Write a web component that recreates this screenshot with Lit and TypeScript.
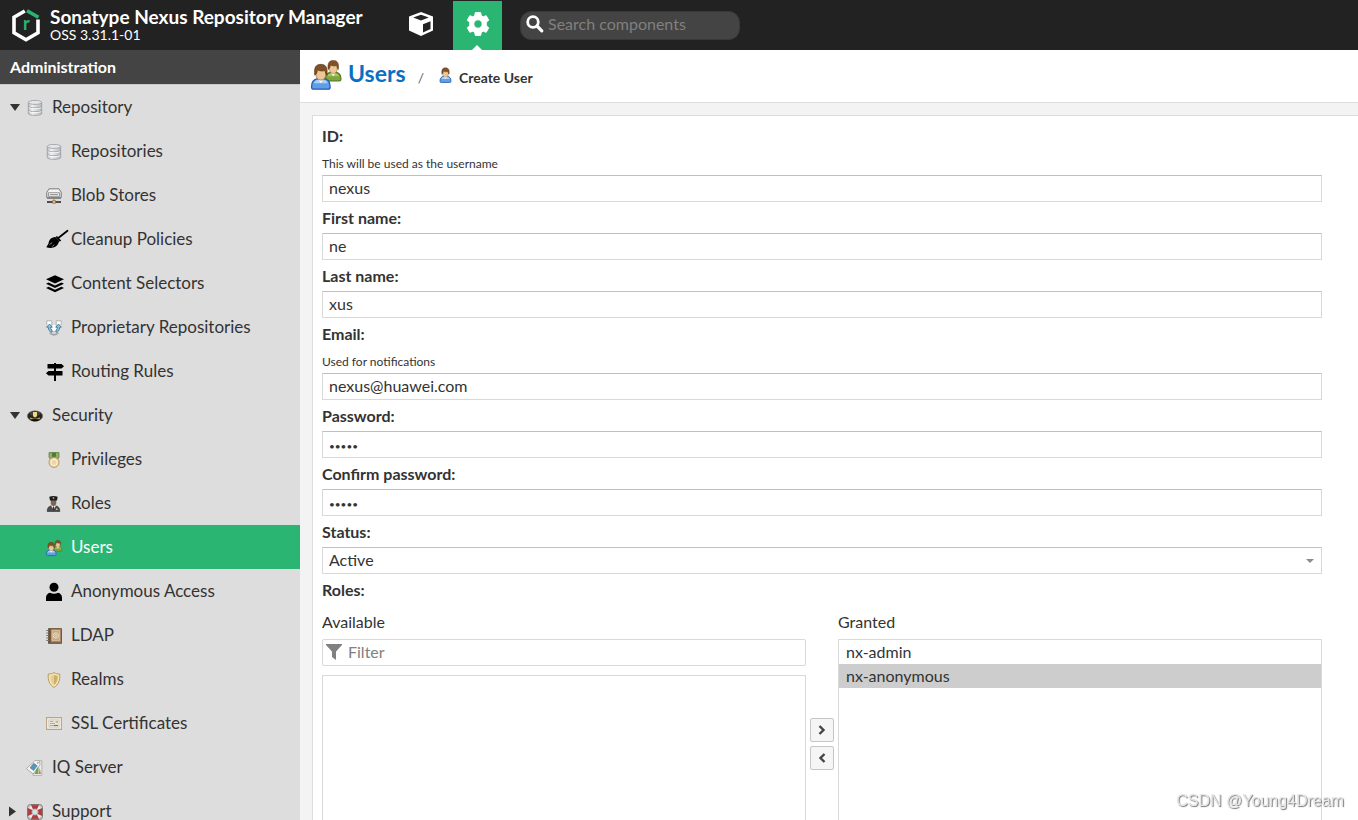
import { LitElement, html, svg, css, nothing, TemplateResult } from "lit";
import { customElement } from "lit/decorators.js";
import { classMap } from "lit/directives/class-map.js";

interface NavItem {
  label: string;
  icon: string;
  level: number;
  arrow?: "open" | "closed";
  active?: boolean;
}

const NAV: NavItem[] = [
  { label: "Repository", icon: "database", level: 0, arrow: "open" },
  { label: "Repositories", icon: "database", level: 1 },
  { label: "Blob Stores", icon: "drive", level: 1 },
  { label: "Cleanup Policies", icon: "broom", level: 1 },
  { label: "Content Selectors", icon: "layers", level: 1 },
  { label: "Proprietary Repositories", icon: "proprietary", level: 1 },
  { label: "Routing Rules", icon: "signs", level: 1 },
  { label: "Security", icon: "cap", level: 0, arrow: "open" },
  { label: "Privileges", icon: "medal", level: 1 },
  { label: "Roles", icon: "officer", level: 1 },
  { label: "Users", icon: "users", level: 1, active: true },
  { label: "Anonymous Access", icon: "person", level: 1 },
  { label: "LDAP", icon: "book", level: 1 },
  { label: "Realms", icon: "shield", level: 1 },
  { label: "SSL Certificates", icon: "certificate", level: 1 },
  { label: "IQ Server", icon: "tags", level: 0 },
  { label: "Support", icon: "lifebuoy", level: 0, arrow: "closed" },
];

const figure = (shirt: string, edge: string, light: string) => svg`
  <path d="M1 14.200c0-3 1.300-4.600 3.600-4.900h3.800c2.300.3 3.600 1.900 3.600 4.900 0 1-.5 1.300-1.200 1.300H2.200C1.500 15.500 1 15.200 1 14.200z" fill=${shirt} stroke=${edge} stroke-width=".8"/>
  <path d="M2.300 12c.5-1.200 1.300-1.700 2.400-1.900h3.700c1.100.2 1.800.7 2.300 1.900z" fill=${light}/>
  <path d="M4.700 9.200h3.600L6.500 12z" fill="#fff"/>
  <path d="M3.600 3.500h5.800v3.300c0 2-1.300 3.300-2.900 3.300S3.600 8.800 3.600 6.800z" fill="#ebc697" stroke="#a87845" stroke-width=".5"/>
  <path d="M2.900 7.200C2.300 2.800 3.500.8 6.500.8s4.200 2 3.600 6.400c-.8-.6-1-1.500-1-2.700-1.400.4-3.300.3-4.700-.5 0 1.500-.4 2.500-1.500 3.200z" fill="#805126" stroke="#5c3817" stroke-width=".4"/>`;

const usersArt = svg`
  <g transform="translate(7 -.4) scale(.75)">${figure("#7fa53c", "#52741f", "#a5c765")}</g>
  <g transform="translate(-.6 1.600) scale(.9)">${figure("#5e9fe8", "#285ba8", "#a9d2fb")}</g>`;

const ICONS: Record<string, TemplateResult> = {
  database: svg`
    <defs><linearGradient id="metal" x1="0" x2="1"><stop offset="0" stop-color="#b9bdc0"/><stop offset=".3" stop-color="#eef0f1"/><stop offset="1" stop-color="#b4b8bc"/></linearGradient></defs>
    <path d="M1.300 2.500v11c0 2.500 13.400 2.500 13.400 0v-11z" fill="url(#metal)" stroke="#979b9f" stroke-width=".8"/>
    <path d="M1.500 6.300c0 2.200 13 2.200 13 0M1.500 10.200c0 2.200 13 2.200 13 0" fill="none" stroke="#92969b" stroke-width=".9"/>
    <path d="M1.800 7.400c1.500 1.700 10.900 1.700 12.400 0M1.800 11.300c1.500 1.700 10.900 1.700 12.400 0" fill="none" stroke="#fff" stroke-width=".8"/>
    <ellipse cx="8" cy="2.400" rx="6.700" ry="2" fill="#e4e6e8" stroke="#999da1" stroke-width=".8"/>`,
  drive: svg`
    <path d="M3 .8h10l2.300 3.500v5.200H.7V4.300z" fill="#d9d9d9" stroke="#777" stroke-width=".9"/>
    <path d="M3.400 1.700h9.200l1.700 2.700H1.700z" fill="#f4f4f4"/>
    <path d="M2.500 4.700h11v3.600h-11z" fill="#eee" stroke="#888" stroke-width=".8"/>
    <path d="M4 6.500h8" stroke="#999" stroke-width="1"/>
    <path d="M1 10.500h14M8 10.500v3" stroke="#888" stroke-width="1"/>
    <path d="M1 14h14" stroke="#4d4d4d" stroke-width="2"/>
    <path d="M6.500 12.500h3v2.800h-3z" fill="#e5b476" stroke="#8e6737" stroke-width=".6"/>`,
  broom: svg`
    <path d="M21.500-1.200 12 6.300" stroke="#000" stroke-width="1.800" stroke-linecap="round"/>
    <path d="m10.300 4.500 4.200 4.600" stroke="#000" stroke-width="1.800"/>
    <path d="M9.300 4.900C5 5.200 2.900 8 2.500 11.500L.3 15.300c5.200 1.800 11.900.2 12.800-6.500z" fill="#000"/>
    <path d="m3.300 12.700 3-2.200M6.300 14.500l2-1.800" stroke="#ddd" stroke-width=".6"/>`,
  layers: svg`
    <path d="M9-.8 18 3.300 9 7.500 0 3.300z"/>
    <path d="m0 7.700 2.600-1.200L9 9.500l6.400-3L18 7.700l-9 4.200zM0 12l2.600-1.200L9 13.800l6.400-3L18 12l-9 4.300z"/>`,
  proprietary: svg`
    <path d="M.8 5V.8h5v5L4.500 8.500c0 3 1.500 3 3.500 3s3.500 0 3.500-3L10.200 5.800v-5h5V5" fill="#fff" stroke="#a5adb1" stroke-width=".9"/>
    <path d="M4 12.500c1.300 3 6.700 3 8 0" fill="none" stroke="#9fa6aa" stroke-width="1.800"/>
    <path d="M3.500 4 .6 7.200h1.700c0 2.800 1.200 4.500 3.700 5V9.800C4.700 9.500 4.700 8.500 4.700 7.200h1.600zM12.500 4 9.700 7.200h1.600c0 1.300 0 2.300-1.300 2.600v2.400c2.500-.5 3.700-2.200 3.700-5h1.700z" fill="#8fc0dc" stroke="#39718d" stroke-width=".8"/>`,
  signs: svg`
    <path d="M8-1h2v18H8z"/>
    <path d="M1.500 0h14L18 2.200l-2.500 2.200h-14z"/>
    <path d="M16.500 7h-14L0 9.200l2.500 2.200h14z"/>`,
  cap: svg`
    <ellipse cx="8" cy="8" rx="7.700" ry="5.200" fill="#272522" stroke="#77736a" stroke-width=".6"/>
    <path d="M2 5c3-2.500 9-2.500 12 0l-2.500 2.500h-7z" fill="#45423b"/>
    <path d="M3 10c3 1.600 7 1.600 10 0" fill="none" stroke="#c9b460" stroke-width="1.200"/>
    <path d="M6 4h4v4.200L8 9.600 6 8.200z" fill="#ecd987"/>
    <path d="M3.500 12c2.500-1.200 6.500-1.200 9 0-2 1.700-7 1.700-9 0z" fill="#0e0d0c"/>`,
  medal: svg`
    <path d="M3 .5h10v5.200l-2.500 1.800h-5L3 5.700z" fill="#8ead69" stroke="#63833f" stroke-width=".8"/>
    <path d="M6 .8h4v4H6z" fill="#53793a"/>
    <circle cx="8" cy="10.400" r="5" fill="#f0d9a5" stroke="#b08f5c" stroke-width=".9"/>
    <circle cx="8" cy="10.400" r="3.200" fill="#ecd7aa" stroke="#fff6dc" stroke-width=".9"/>`,
  officer: svg`
    <path d="M1.200 15.500c0-3.600 1.300-5 3.500-5.500h5.600c2.200.5 3.500 1.900 3.500 5.500z" fill="#4b4b4f" stroke="#2b2b2d" stroke-width=".6"/>
    <path d="M5 9.500h5L7.500 14z" fill="#eee"/>
    <path d="M7 10.500h1l.4 3-.9 1.300-.9-1.300z" fill="#333"/>
    <path d="M4.800 3.500h5.400v3.800c0 1.600-1.200 2.700-2.700 2.700S4.800 8.900 4.800 7.300z" fill="#7d6455"/>
    <path d="M3.300.7c2.500-.8 5.900-.8 8.400 0L11 4.500H4z" fill="#1c1c1e"/>
    <path d="M6.800 1.300h1.400v1.500H6.800zM10 12.500h1.500V14H10z" fill="#e3c75c"/>`,
  users: usersArt,
  person: svg`
    <circle cx="8" cy="3.300" r="4.500"/>
    <path d="M0 17v-3.300c0-2.700 1.700-4.400 4-4.900 2.500 1.300 5.500 1.300 8 0 2.300.5 4 2.200 4 4.900V17z"/>`,
  book: svg`
    <path d="M2.500.6h13v14.800h-13z" fill="#a98661" stroke="#6d4f30" stroke-width=".9"/>
    <path d="M2.600.8h2.200v14.400H2.600z" fill="#6b4f35"/>
    <path d="M6 2.500h7.500v10H6z" fill="#c5a985" stroke="#dcc8ac" stroke-width=".7"/>
    <circle cx="9.800" cy="7.500" r="2.700" fill="none" stroke="#f2e8da" stroke-width=".8"/>
    <circle cx="9.800" cy="7.500" r="1" fill="none" stroke="#f2e8da" stroke-width=".8"/>
    <path d="M.3 2.500h3M.3 5h3M.3 7.500h3M.3 10h3M.3 12.500h3" stroke="#777" stroke-width="1"/>
    <path d="M3 14.800h12" stroke="#7f6245" stroke-width="1.200"/>`,
  shield: svg`
    <path d="M8 .5c1.700 1.300 3.300 1.500 5.700 1.500.6 6-1 10.500-5.700 13.500C3.300 12.500 1.700 8 2.300 2 4.700 2 6.300 1.800 8 .5z" fill="#f3e5b5" stroke="#b99a61" stroke-width="1"/>
    <path d="M8 2.800c1.300.8 2.300 1 3.800 1.100.1 4-1.100 7.200-3.800 9.200z" fill="#cbb069"/>
    <path d="M8 2.800c-1.300.8-2.300 1-3.800 1.100.1 4 1.100 7.200 3.800 9.200z" fill="#e2cf92"/>`,
  certificate: svg`
    <path d="M.6 1.600h14.800v11.800H.6z" fill="#f8f5ee" stroke="#b8a584" stroke-width="1.100"/>
    <path d="M2.800 3.800h10.400v7.400H2.800z" fill="#ede9df" stroke="#c7bba4" stroke-width=".7"/>
    <path d="M4 5.500h3.500M4 7.500h5M4 9.500h3" stroke="#98a4b5" stroke-width=".9"/>
    <path d="M9.500 4.800H12V7H9.500z" fill="#c9b793"/>
    <path d="M7.500 9.500h4.500" stroke="#5877a6" stroke-width="1.200"/>`,
  tags: svg`
    <path d="M8.500 1.500 14.800.6v14.800H6z" fill="#eee" stroke="#a5a5a5" stroke-width=".8"/>
    <path d="M8 .6h4.500l.5 4.200L6.200 14 -.6 8.600z" fill="#f7f7f7" stroke="#9b9b9b" stroke-width=".8"/>
    <path d="m6.800 3.200 3.400 2.600-3.600 4.800L3 7.800z" fill="#5796ba" stroke="#39647c" stroke-width=".5"/>
    <path d="m9.500 9 2-2.500v7.500H7.500z" fill="#6aa653"/>
    <path d="m12.700 7.500 1.100 6.500h-1.700z" fill="#c86445"/>
    <circle cx="10.800" cy="2.700" r="1" fill="#aaa"/>`,
  lifebuoy: svg`
    <rect x=".5" y=".5" width="15" height="15" rx="3" fill="#c9c9c9" stroke="#777" stroke-width=".9"/>
    <circle cx="8" cy="8" r="5" fill="none" stroke="#f3eeee" stroke-width="4.200"/>
    <path d="M4.500 1.200h7L10 4.800H6zM4.500 14.800h7L10 11.200H6zM1.200 4.500v7L4.800 10V6zM14.800 4.500v7L11.200 10V6z" fill="#b8383a" stroke="#8b2526" stroke-width=".5"/>
    <circle cx="8" cy="8" r="3.100" fill="#ddd" stroke="#999" stroke-width=".7"/>`,
};

@customElement("app-root")
export class AppRoot extends LitElement {
  static styles = css`
    :host {
      display: flex;
      flex-direction: column;
      height: 100vh;
      overflow: hidden;
      background: #fff;
      color: #333;
      font-family: Lato, "Open Sans", sans-serif;
      font-size: 16px;
    }
    * { box-sizing: border-box; }
    svg { display: block; flex: none; overflow: visible; }
    a { color: inherit; text-decoration: none; }
    input, select, button { font: inherit; color: inherit; }

    .top {
      flex: none;
      display: flex;
      align-items: center;
      height: 50px;
      padding-left: 11px;
      background: #222;
      color: #fff;
    }
    .brand { display: flex; align-items: center; gap: 9px; width: 385px; }
    .product { font-size: 19px; font-weight: 700; line-height: 20px; margin: 0; white-space: nowrap; }
    .version { font-size: 14px; line-height: 16px; margin: 0; }
    .mode {
      display: grid;
      place-items: center;
      width: 49px;
      height: 49px;
      margin: 1px 0 0;
      padding: 0 0 4px;
      border: 0;
      background: transparent;
      position: relative;
    }
    .mode + .mode { margin-left: 8px; }
    .mode.on { background: #2ab573; }
    .mode.on::after {
      content: "";
      position: absolute;
      left: 19px;
      bottom: 0;
      border: 5px solid transparent;
      border-top: 0;
      border-bottom-color: #fff;
    }
    .search {
      display: flex;
      align-items: center;
      gap: 4px;
      width: 220px;
      height: 29px;
      margin-left: 18px;
      padding: 0 8px 3px 5px;
      border: 1px solid #383838;
      border-radius: 11px;
      background: #444;
    }
    .search input {
      flex: 1;
      min-width: 0;
      padding: 0;
      border: 0;
      outline: 0;
      background: transparent;
    }
    .search input::placeholder { color: #808080; opacity: 1; }

    .body { flex: 1; display: flex; min-height: 0; }
    .side { flex: none; width: 300px; background: #ddd; overflow: hidden; }
    .side-title {
      margin: 0;
      padding-left: 10px;
      font-size: 16px;
      font-weight: 700;
      line-height: 34px;
      background: #444;
      color: #fff;
      border-bottom: 1px solid #c8c8c8;
    }
    .nav { display: flex; flex-direction: column; }
    .item {
      display: flex;
      align-items: center;
      height: 44px;
      padding: 2px 0 0 9px;
      font-size: 17px;
      white-space: nowrap;
    }
    .item.child { padding-left: 46px; }
    .item.active { background: #2ab573; color: #fff; }
    .arrow { margin-right: 6px; }
    .label { margin-left: 9px; padding-bottom: 4px; }

    .main {
      flex: 1;
      min-width: 0;
      display: flex;
      flex-direction: column;
      background: #f3f3f3;
      overflow: hidden;
    }
    .crumbs {
      flex: none;
      display: flex;
      align-items: center;
      height: 53px;
      padding: 0 0 2px 11px;
      background: #fff;
      border-bottom: 1px solid #ddd;
    }
    .crumb-main { margin-left: 7px; padding-bottom: 4px; font-size: 23px; font-weight: 700; color: #0a6fc2; }
    .slash { margin: 0 15px 0 12px; padding-top: 4px; font-size: 14px; color: #666; }
    .crumb-sub { margin-left: 7px; padding-top: 4px; font-size: 14px; font-weight: 700; }
    .form {
      flex: none;
      margin: 12px 0 0 12px;
      padding: 4px 36px 20px 9px;
      background: #fff;
      border: solid #ddd;
      border-width: 1px 0 0 1px;
    }
    .name {
      display: block;
      margin: 4px 0 3px;
      padding: 0;
      font-weight: 700;
      line-height: 24px;
    }
    .help { margin: 0; padding-top: 2px; font-size: 12px; line-height: 22px; }
    .box {
      display: block;
      width: 100%;
      height: 27px;
      margin: 0;
      padding: 0 6px 2px;
      border: 1px solid #d9d9d9;
      border-top-color: #c0c0c0;
      border-radius: 0;
      background: #fff;
      outline: 0;
    }
    .box[type="password"] { padding: 2px 6px 0; font-size: 10px; }
    .pick { display: grid; align-items: center; }
    .pick > * { grid-area: 1 / 1; }
    .pick svg { justify-self: end; margin-right: 7px; pointer-events: none; }
    select.box { appearance: none; }

    .roles { margin: 4px 0 0; padding: 0; border: 0; min-width: 0; }
    .transfer { display: grid; grid-template-columns: 1fr 24px 1fr; column-gap: 4px; }
    .caption { line-height: 34px; }
    .granted-caption { grid-column: 3; }
    .available { display: flex; flex-direction: column; gap: 9px; }
    .filter {
      display: flex;
      align-items: center;
      gap: 6px;
      height: 27px;
      padding: 0 3px 2px;
      border: 1px solid #d9d9d9;
      border-radius: 2px;
    }
    .filter input { flex: 1; min-width: 0; padding: 0; border: 0; outline: 0; background: transparent; }
    .filter input::placeholder { color: #808080; opacity: 1; }
    .list {
      display: block;
      width: 100%;
      height: 174px;
      margin: 0;
      padding: 0;
      border: 1px solid #d9d9d9;
      border-radius: 0;
      background: #fff;
      outline: 0;
      overflow: hidden;
    }
    .list.tall { height: 210px; }
    .list option { height: 24px; padding: 2px 7px 0; color: #333; }
    .list option:checked { background: #cdcdcd linear-gradient(#cdcdcd, #cdcdcd); color: #333; }
    .moves { display: flex; flex-direction: column; justify-content: center; gap: 4px; }
    .move {
      display: grid;
      place-items: center;
      width: 24px;
      height: 24px;
      padding: 0;
      border: 1px solid #c6c6c6;
      border-radius: 2px;
      background: #f5f5f5;
    }
    .mark {
      position: fixed;
      right: 14px;
      bottom: 9px;
      font-family: "Liberation Sans", sans-serif;
      font-size: 16px;
      line-height: 20px;
      color: #e6e6e6;
      text-shadow: 1px 1px 1px #777;
    }
  `;

  private icon(name: string, size = 16) {
    return html`<svg width=${size} height=${size} viewBox="0 0 16 16" aria-hidden="true">${ICONS[name]}</svg>`;
  }

  private arrow(kind?: string) {
    return html`<svg class="arrow" width="12" height="12" viewBox="0 0 12 12" aria-hidden="true">
      ${kind === "open" ? svg`<path d="M1 2h10L6 9z" fill="#333"/>` : kind === "closed" ? svg`<path d="M0 .5v10l7-5z" fill="#333"/>` : nothing}
    </svg>`;
  }

  private field(id: string, label: string, value: string, help = "", type = "text") {
    return html`
      <label class="name" for=${id}>${label}:</label>
      ${help ? html`<p class="help" id="${id}-help">${help}</p>` : nothing}
      <input class="box" id=${id} type=${type} .value=${value} autocomplete="off" />`;
  }

  render() {
    return html`
      <header class="top">
        <div class="brand">
          <svg width="30" height="34" viewBox="0 0 30 34" aria-hidden="true">
            <path d="M13.800 3 3 9.200v15.600L15 31.700l12-6.900V11.500" fill="none" stroke="#fff" stroke-width="3.600"/>
            <path d="m16 2.700 11.500 6.600" stroke="#2ab573" stroke-width="3.600"/>
            <text x="12" y="22" font-family="Lato" font-size="18" font-weight="700" fill="#2ab573">r</text>
          </svg>
          <div>
            <h1 class="product">Sonatype Nexus Repository Manager</h1>
            <p class="version">OSS 3.31.1-01</p>
          </div>
        </div>
        <button class="mode" aria-label="Browse">
          <svg width="26" height="26" viewBox="0 0 26 26">
            <path d="M13 1 25 5.500v14L13 25 1 19.500v-14z" fill="#fff"/>
            <path d="M13 3.700 20.800 6.500 13 9.500 5.200 6.500zM15 13.200l7.500-3v7.700L15 21.500z" fill="#222"/>
          </svg>
        </button>
        <button class="mode on" aria-label="Administration">
          <svg width="24" height="24" viewBox="0 0 24 24">
            <path fill="#fff" stroke="#fff" stroke-width="1" stroke-linejoin="round" fill-rule="evenodd" d="M9.300.6h5.400l.6 3.100 1.900 1.100 3-1.100 2.500 4.500-2.400 2.100v3.400l2.400 2.100-2.500 4.500-3-1.100-1.900 1.100-.6 3.100H9.300l-.6-3.100-1.900-1.100-3 1.100-2.500-4.500 2.400-2.100v-3.400L1.300 8.200l2.500-4.500 3 1.100 1.900-1.100zM12 7.800a4.200 4.200 0 1 0 0 8.400 4.200 4.200 0 0 0 0-8.400z"/>
          </svg>
        </button>
        <label class="search">
          <svg width="18" height="18" viewBox="0 0 18 18" aria-hidden="true">
            <circle cx="7" cy="7" r="5.300" fill="none" stroke="#fff" stroke-width="2.800"/>
            <path d="m11 11 4.800 4.800" stroke="#fff" stroke-width="3.200" stroke-linecap="round"/>
          </svg>
          <input type="search" placeholder="Search components" aria-label="Search components" />
        </label>
      </header>

      <div class="body">
        <aside class="side">
          <h2 class="side-title">Administration</h2>
          <nav class="nav">
            ${NAV.map(
              (n) => html`<a href="#" class=${classMap({ item: true, child: n.level === 1, active: !!n.active })}>
                ${n.level === 0 ? this.arrow(n.arrow) : nothing}${this.icon(n.icon)}<span class="label">${n.label}</span>
              </a>`
            )}
          </nav>
        </aside>

        <main class="main">
          <div class="crumbs">
            ${this.icon("users", 30)}
            <a class="crumb-main" href="#">Users</a>
            <span class="slash">/</span>
            <svg width="13" height="16" viewBox="0 0 13 16" aria-hidden="true">${figure("#5e9fe8", "#285ba8", "#a9d2fb")}</svg>
            <span class="crumb-sub">Create User</span>
          </div>

          <form class="form">
            ${this.field("user-id", "ID", "nexus", "This will be used as the username")}
            ${this.field("first", "First name", "ne")}
            ${this.field("last", "Last name", "xus")}
            ${this.field("email", "Email", "nexus@huawei.com", "Used for notifications")}
            ${this.field("password", "Password", "nexus", "", "password")}
            ${this.field("confirm", "Confirm password", "nexus", "", "password")}
            <label class="name" for="status">Status:</label>
            <div class="pick">
              <select class="box" id="status"><option>Active</option><option>Disabled</option></select>
              <svg width="10" height="6" viewBox="0 0 10 6" aria-hidden="true"><path d="M1 1h8L5 5z" fill="#8c8c8c"/></svg>
            </div>
            <fieldset class="roles">
              <legend class="name">Roles:</legend>
              <div class="transfer">
                <label class="caption" for="available">Available</label>
                <label class="caption granted-caption" for="granted">Granted</label>
                <div class="available">
                  <label class="filter">
                    <svg width="16" height="16" viewBox="0 0 16 16" aria-hidden="true"><path d="M0 0h16v1l-6 6.500V16l-4-3V7.500L0 1z" fill="#808080"/></svg>
                    <input type="text" placeholder="Filter" aria-label="Filter" />
                  </label>
                  <select class="list" id="available" multiple></select>
                </div>
                <div class="moves">
                  <button class="move" type="button" aria-label="Add to Granted">
                    <svg width="8" height="10" viewBox="0 0 8 10"><path d="m1.500 1 4 4-4 4" fill="none" stroke="#444" stroke-width="2.400"/></svg>
                  </button>
                  <button class="move" type="button" aria-label="Remove from Granted">
                    <svg width="8" height="10" viewBox="0 0 8 10"><path d="m6.500 1-4 4 4 4" fill="none" stroke="#444" stroke-width="2.400"/></svg>
                  </button>
                </div>
                <select class="list tall" id="granted" multiple>
                  <option>nx-admin</option>
                  <option selected>nx-anonymous</option>
                </select>
              </div>
            </fieldset>
          </form>
        </main>
      </div>
      <div class="mark">CSDN @Young4Dream</div>
    `;
  }
}
